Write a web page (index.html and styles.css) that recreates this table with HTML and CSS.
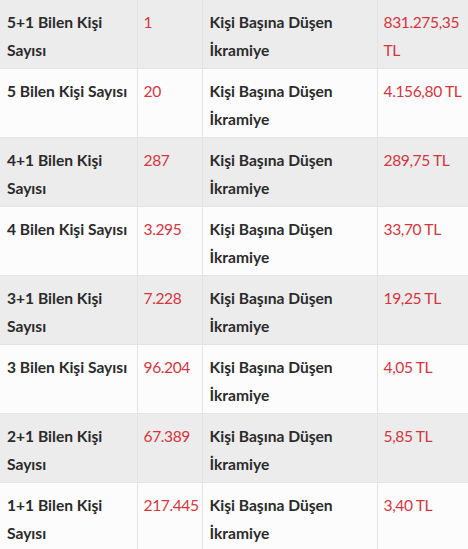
FILE: index.html
```html
<!DOCTYPE html>
<html lang="tr">
<head>
<meta charset="utf-8">
<link rel="stylesheet" href="styles.css">
</head>
<body>
<table class="prize-table">
  <colgroup>
    <col class="c1"><col class="c2"><col class="c3"><col class="c4">
  </colgroup>
  <tbody>
    <tr><td class="label">5+1 Bilen Kişi Sayısı</td><td class="val">1</td><td class="label">Kişi Başına Düşen İkramiye</td><td class="val">831.275,35 TL</td></tr>
    <tr><td class="label">5 Bilen Kişi Sayısı</td><td class="val">20</td><td class="label">Kişi Başına Düşen İkramiye</td><td class="val">4.156,80 TL</td></tr>
    <tr><td class="label">4+1 Bilen Kişi Sayısı</td><td class="val">287</td><td class="label">Kişi Başına Düşen İkramiye</td><td class="val">289,75 TL</td></tr>
    <tr><td class="label">4 Bilen Kişi Sayısı</td><td class="val">3.295</td><td class="label">Kişi Başına Düşen İkramiye</td><td class="val">33,70 TL</td></tr>
    <tr><td class="label">3+1 Bilen Kişi Sayısı</td><td class="val">7.228</td><td class="label">Kişi Başına Düşen İkramiye</td><td class="val">19,25 TL</td></tr>
    <tr><td class="label">3 Bilen Kişi Sayısı</td><td class="val">96.204</td><td class="label">Kişi Başına Düşen İkramiye</td><td class="val">4,05 TL</td></tr>
    <tr><td class="label">2+1 Bilen Kişi Sayısı</td><td class="val">67.389</td><td class="label">Kişi Başına Düşen İkramiye</td><td class="val">5,85 TL</td></tr>
    <tr><td class="label">1+1 Bilen Kişi Sayısı</td><td class="val">217.445</td><td class="label">Kişi Başına Düşen İkramiye</td><td class="val">3,40 TL</td></tr>
  </tbody>
</table>
</body>
</html>
```

FILE: styles.css
```css
html, body {
  margin: 0;
  padding: 0;
  background: #fcfcfc;
}
.prize-table {
  border-collapse: collapse;
  table-layout: fixed;
  width: 468px;
  font-family: Lato, "Noto Sans", sans-serif;
  font-size: 15.6px;
  line-height: 28px;
}
.c1 { width: 137px; }
.c2 { width: 65px; }
.c3 { width: 175px; }
.c4 { width: 91px; }
.prize-table td {
  vertical-align: top;
  height: 56px;
  padding: 8px 5px 4px 7px;
  border-right: 1px solid #e4e4e4;
  border-bottom: 1px solid #e4e4e4;
}
.prize-table td:last-child { border-right: none; }
.prize-table tr:nth-child(odd) td { background: #ececec; }
.prize-table tr:nth-child(even) td { background: #fcfcfc; }
.label {
  color: #2b2b2b;
  font-weight: bold;
}
.prize-table td.val {
  color: #d3363e;
  letter-spacing: -0.4px;
  padding-left: 6px;
  padding-right: 1px;
}
```
